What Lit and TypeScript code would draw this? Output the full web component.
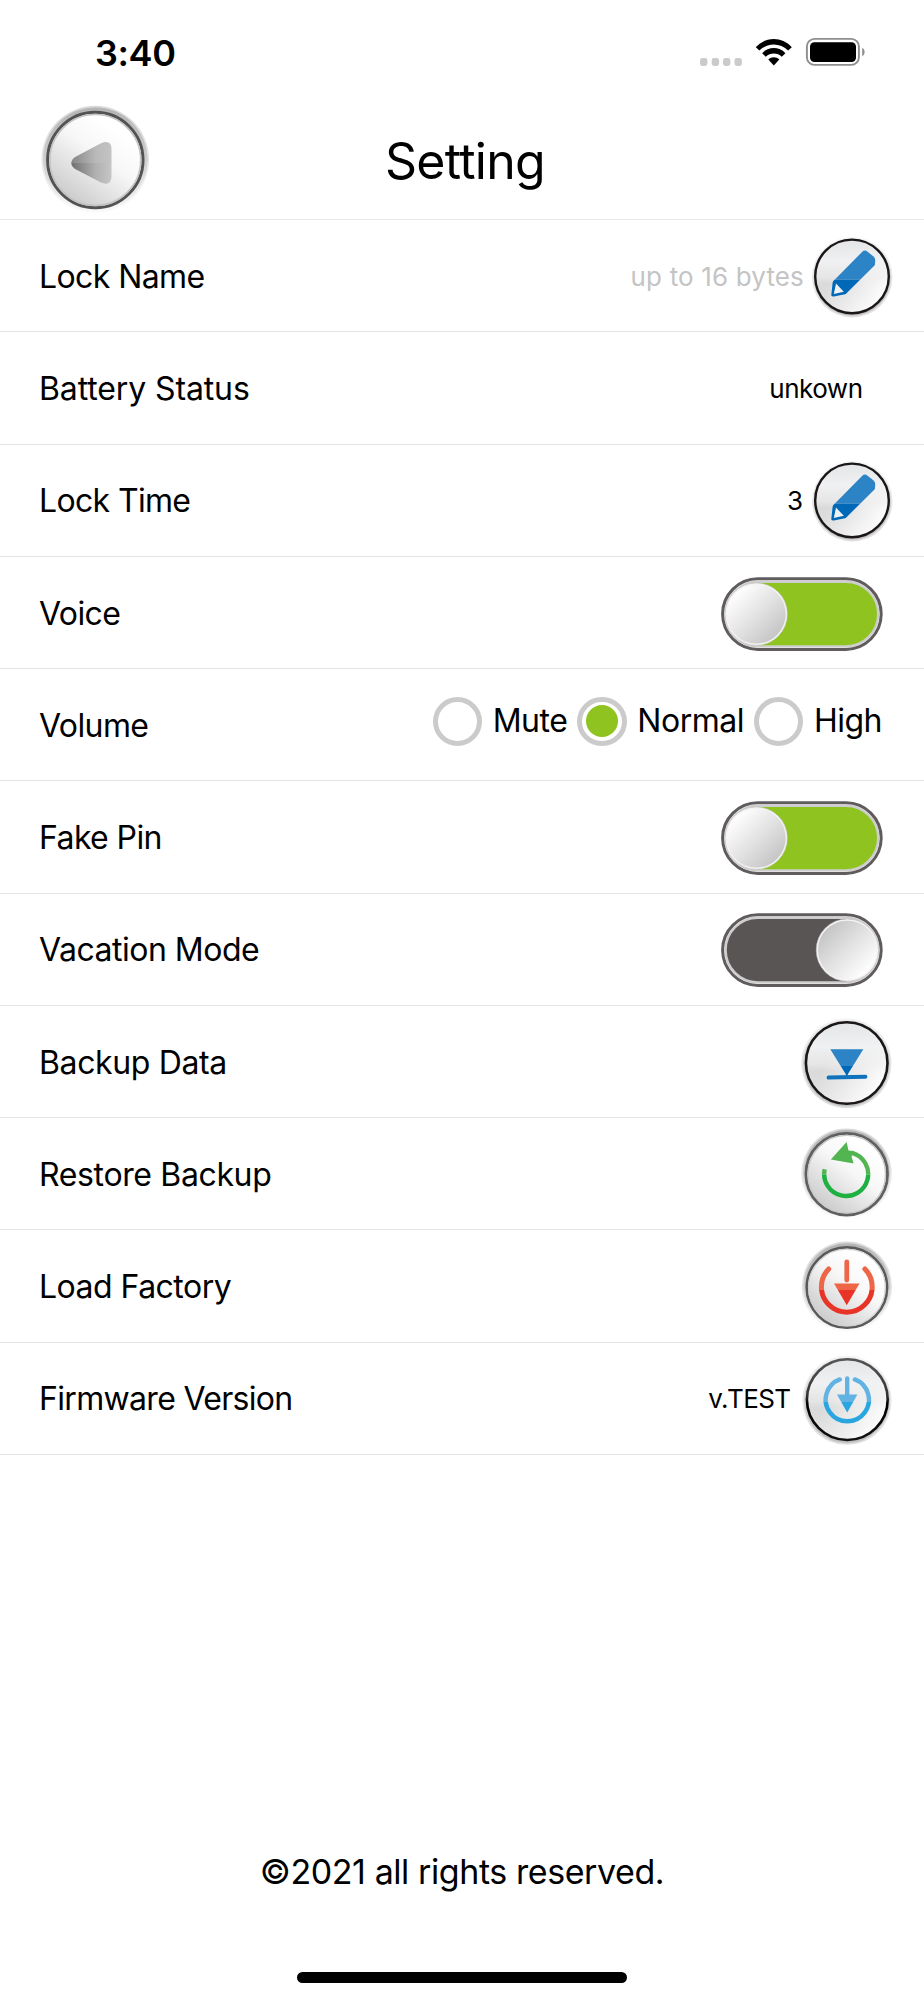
import { LitElement, html, css, svg, nothing } from "lit";
import { customElement, property, state } from "lit/decorators.js";
import { styleMap } from "lit/directives/style-map.js";

@customElement("status-bar")
class StatusBar extends LitElement {
  static styles = css`
    :host { display: flex; height: 104px; box-sizing: border-box; padding: 30px 59px 0 95px; justify-content: space-between; align-items: flex-start; }
    .time { font-size: 36px; font-weight: 600; line-height: 46px; letter-spacing: -0.4px; }
    .icons { display: block; width: 170px; height: 46px; }
  `;
  render() {
    return html`
      <span class="time">3:40</span>
      <svg class="icons" viewBox="695 30 170 46">
        <g fill="#cbcbcb">
          <rect x="700" y="58" width="7.4" height="8" rx="2.4" />
          <rect x="711.7" y="58" width="7.4" height="8" rx="2.4" />
          <rect x="723" y="58" width="7.4" height="8" rx="2.4" />
          <rect x="734.5" y="58" width="7.4" height="8" rx="2.4" />
        </g>
        <g>
          <path d="M755.8 47.2C765.5 36.4 782.1 36.4 791.8 47.2L788.2 50.6C780.4 42.4 767.2 42.4 759.4 50.6Z" />
          <path d="M762.2 53.2C768.6 46.4 779 46.4 785.4 53.2L781.8 56.7C777.4 52.3 770.2 52.3 765.8 56.7Z" />
          <path d="M768.3 59.6C771.4 56.4 776.2 56.4 779.3 59.6L773.8 65.4Z" />
        </g>
        <rect x="806.9" y="38.9" width="52" height="26" rx="7.6" fill="none" stroke="#8e8e8e" stroke-width="1.9" />
        <rect x="810" y="42.2" width="46" height="19.8" rx="4.4" />
        <path d="M862.2 48c3.2 1 3.2 7 0 8.2z" fill="#8e8e8e" />
      </svg>
    `;
  }
}

type Glyph = "back" | "edit" | "backup" | "restore" | "factory" | "firmware";

@customElement("round-button")
class RoundButton extends LitElement {
  @property() glyph: Glyph = "edit";

  static styles = css`
    :host { display: block; }
    svg { display: block; }
    .back { width: 112px; height: 112px; }
    .edit { width: 84px; height: 84px; }
    .backup, .restore, .factory, .firmware { width: 94px; height: 94px; }
  `;

  private defs(r: number, gray: boolean) {
    return svg`
      <defs>
        <linearGradient id="face" x1="0.75" y1="0.2" x2="0.2" y2="0.95">
          <stop offset="0" stop-color="#ffffff" />
          <stop offset="0.35" stop-color="#f8f7f8" />
          <stop offset="1" stop-color="#c9c8c9" />
        </linearGradient>
        <linearGradient id="plain" x1="0.15" y1="0.7" x2="0.8" y2="0.95">
          <stop offset="0" stop-color="#d3d3d3" />
          <stop offset="0.5" stop-color="#e6e6e6" />
          <stop offset="1" stop-color="#fcfcfc" />
        </linearGradient>
        <linearGradient id="gloss" x1="0" y1="0" x2="0" y2="1">
          <stop offset="0" stop-color="#e4e5e7" />
          <stop offset="0.3" stop-color="#f1f2f3" stop-opacity="0.95" />
          <stop offset="0.52" stop-color="#efefef" stop-opacity="0.65" />
          <stop offset="0.6" stop-color="#efefef" stop-opacity="0.25" />
          <stop offset="1" stop-color="#ffffff" stop-opacity="0.35" />
        </linearGradient>
        <linearGradient id="halo" x1="0" y1="0" x2="0" y2="1">
          <stop offset="0" stop-color=${gray ? "#b4b4b4" : "#ececec"} />
          <stop offset="0.5" stop-color="#cdcdce" />
          <stop offset="1" stop-color=${gray ? "#fbfafa" : "#c0bec1"} />
        </linearGradient>
        <linearGradient id="rim" x1="0" y1="0" x2="0" y2="1">
          <stop offset="0" stop-color="#555" />
          <stop offset="0.45" stop-color="#333" />
          <stop offset="0.55" stop-color="#000" />
          <stop offset="1" stop-color="#111" />
        </linearGradient>
        <linearGradient id="arrow" x1="0" y1="0" x2="1" y2="0">
          <stop offset="0" stop-color="#858585" />
          <stop offset="0.6" stop-color="#b9b9ba" />
          <stop offset="1" stop-color="#c4c4c4" />
        </linearGradient>
        <linearGradient id="arrowLow" x1="0" y1="0" x2="1" y2="0">
          <stop offset="0" stop-color="#6f6f6f" />
          <stop offset="0.6" stop-color="#b0b0b0" />
          <stop offset="1" stop-color="#c6c6c6" />
        </linearGradient>
        <clipPath id="upper"><rect x="0" y="0" width="120" height=${r} /></clipPath>
        <clipPath id="lower"><rect x="0" y=${r} width="120" height="120" /></clipPath>
      </defs>`;
  }

  private halo(cx: number, cy: number, r: number) {
    return svg`
      <circle cx=${cx} cy=${cy} r=${r} fill="url(#halo)" opacity="0.5" />
      <circle cx=${cx} cy=${cy} r=${r - 1.6} fill="url(#halo)" />`;
  }

  private back() {
    const tri = "M32.5 55.5Q30 59 32.5 62.5Q34 64.5 37 66L61 78.6Q71 82.5 71.5 72.5V44.5Q71 35.5 61 39.2L37 52Q34 53.2 32.5 55.5Z";
    return html`<svg class="back" viewBox="0 0 112 112">
      ${this.defs(59, true)}
      ${this.halo(55.3, 55.6, 53.8)}
      <circle cx="55.3" cy="56" r="47.7" fill="url(#face)" stroke="#535254" stroke-width="3" />
      <circle cx="55.3" cy="56" r="45.4" fill="none" stroke="#c2c2c3" stroke-width="1.5" />
      <path clip-path="url(#upper)" d=${tri} fill="url(#arrow)" />
      <path clip-path="url(#lower)" d=${tri} fill="url(#arrowLow)" />
    </svg>`;
  }

  private edit() {
    const body = "M23.8 45.6L52.3 16.7Q54.8 14.3 57.6 16.7L63.6 21.6Q65.6 23.4 65.2 26L65 29.2Q64.8 30.2 64 31L36.3 58.4Q35.8 59 35 59.2L23.8 61.4Q20.6 62 21.4 59L22.6 48Q22.8 46.6 23.8 45.6Z";
    return html`<svg class="edit" viewBox="0 0 84 84">
      ${this.defs(44.5, false)}
      ${this.halo(42.3, 42.2, 40.2)}
      <circle cx="42" cy="41.4" r="36.8" fill="url(#plain)" />
      <circle cx="42" cy="41.4" r="36.8" fill="url(#gloss)" stroke="#1b1718" stroke-width="2.4" />
      <path clip-path="url(#upper)" d=${body} fill="#2c83c5" />
      <path clip-path="url(#lower)" d=${body} fill="#0069b7" />
      <path d="M26 48.6L33.8 56.8L23.8 59Z" fill="#eef2f6" />
    </svg>`;
  }

  private backup() {
    const tri = "M30.3 33.2H63.3L47.8 58.2V60H45.8V58.2Z";
    return html`<svg class="backup" viewBox="0 0 94 94">
      ${this.defs(50, false)}
      ${this.halo(46.5, 47.2, 45)}
      <circle cx="46.7" cy="47" r="40.8" fill="url(#plain)" />
      <circle cx="46.7" cy="47" r="40.8" fill="url(#gloss)" stroke="#1b1718" stroke-width="2.6" />
      <path clip-path="url(#upper)" d=${tri} fill="#2c83c5" />
      <path clip-path="url(#lower)" d=${tri} fill="#0069b7" />
      <path d="M28.6 61.6L65.4 60.8" stroke="#0f72bd" stroke-width="4" stroke-linecap="round" />
    </svg>`;
  }

  private restore() {
    const mark = (c: string) => svg`
      <path d="M24.7 41.2A22 22 0 1 0 52 24.8" fill="none" stroke=${c} stroke-width="4.4" />
      <path d="M30.8 31.5L46.6 14L48.5 22.6L54 23L51.6 28.8L53.6 35.4Z" fill=${c} />`;
    return html`<svg class="restore" viewBox="0 0 94 94">
      ${this.defs(46.5, true)}
      ${this.halo(46.5, 45.6, 45.2)}
      <circle cx="46.7" cy="46.2" r="40.8" fill="url(#face)" stroke="#606061" stroke-width="2.8" />
      <circle cx="46.7" cy="46.2" r="38.8" fill="none" stroke="#c8c8c9" stroke-width="1.3" />
      <g clip-path="url(#upper)">${mark("#53b552")}</g>
      <g clip-path="url(#lower)">${mark("#1fb042")}</g>
    </svg>`;
  }

  private factory() {
    const mark = (c: string) => svg`
      <g fill="none" stroke=${c} stroke-width="5" stroke-linecap="round">
        <path d="M28.7 29A25.4 25.4 0 1 0 64.9 29" />
        <path d="M46.8 22V40" stroke-width="4.8" />
      </g>
      <path d="M34 43.5H59.5L46.8 65.2Z" fill=${c} />`;
    return html`<svg class="factory" viewBox="0 0 94 94">
      ${this.defs(50, true)}
      ${this.halo(46.9, 46.8, 45.2)}
      <circle cx="46.9" cy="47.6" r="40.2" fill="url(#face)" stroke="#59585a" stroke-width="2.6" />
      <circle cx="46.9" cy="47.6" r="38.4" fill="none" stroke="#d0d0d1" stroke-width="1.2" />
      <g clip-path="url(#upper)">${mark("#ee6547")}</g>
      <g clip-path="url(#lower)">${mark("#e73427")}</g>
    </svg>`;
  }

  private firmware() {
    const mark = (c: string) => svg`
      <g fill="none" stroke=${c} stroke-width="4.4" stroke-linecap="round">
        <path d="M39.8 27.4A21.6 21.6 0 1 0 54.8 27.4" />
        <path d="M47.2 26.5V44" />
      </g>
      <path d="M37 42.5H57.4L47.2 60.6Z" fill=${c} />`;
    return html`<svg class="firmware" viewBox="0 0 94 94">
      ${this.defs(50, false)}
      ${this.halo(47, 48.2, 44.6)}
      <circle cx="47.3" cy="47.6" r="40.4" fill="url(#plain)" />
      <circle cx="47.3" cy="47.6" r="40.4" fill="url(#gloss)" stroke="url(#rim)" stroke-width="2.6" />
      <g clip-path="url(#upper)">${mark("#62b3e3")}</g>
      <g clip-path="url(#lower)">${mark("#29a6e0")}</g>
    </svg>`;
  }

  render() {
    return this[this.glyph]();
  }
}

@customElement("slide-switch")
class SlideSwitch extends LitElement {
  @property({ type: Boolean }) on = false;

  static styles = css`
    :host { display: block; }
    .switch { display: block; width: 162px; height: 74px; }
  `;

  render() {
    const cx = this.on ? 35.2 : 126.4;
    return html`<svg class="switch" viewBox="0 0 162 74">
      <defs>
        <linearGradient id="knob" x1=${this.on ? 0.15 : 0.85} y1=${this.on ? 0.15 : 0.85} x2=${this.on ? 0.85 : 0.15} y2=${this.on ? 0.85 : 0.15}>
          <stop offset="0" stop-color="#fff" />
          <stop offset="0.5" stop-color="#e4e3e4" />
          <stop offset="1" stop-color="#c6c5c6" />
        </linearGradient>
      </defs>
      <rect x="1.6" y="1.8" width="158.6" height="70.6" rx="35.3" fill="#f0eff0" stroke="#605c5e" stroke-width="3" />
      <rect x="4.6" y="4.8" width="152.6" height="64.6" rx="32.3" fill=${this.on ? "#8fc31f" : "#595554"} stroke="#cfcece" stroke-width="2.4" />
      <circle cx=${cx} cy="37.1" r="30.3" fill="url(#knob)" stroke="#f4f3f4" stroke-width="1.8" />
      <circle cx=${cx} cy="37.1" r="31.2" fill="none" stroke="#bcbbbb" stroke-width="0.5" />
    </svg>`;
  }
}

@customElement("volume-options")
class VolumeOptions extends LitElement {
  @property() value = "Normal";

  static styles = css`
    :host { display: flex; gap: 10px; padding: 0 42px 9px 0; }
    .option { display: flex; align-items: center; gap: 10.5px; font-size: 32px; letter-spacing: -0.5px; line-height: 50px; }
    .ring { display: grid; place-items: center; box-sizing: border-box; width: 49.5px; height: 49.5px; border: 5px solid #cbcbcb; border-radius: 50%; }
    .dot { width: 32px; height: 32px; border-radius: 50%; background: #8fc31f; }
  `;

  render() {
    return ["Mute", "Normal", "High"].map(
      (o) => html`<label class="option" @click=${() => (this.value = o)}>
        <span class="ring">${o === this.value ? html`<span class="dot"></span>` : nothing}</span>${o}
      </label>`
    );
  }
}

@customElement("setting-row")
class SettingRow extends LitElement {
  @property() label = "";
  @property({ type: Number }) tracking = 0;

  static styles = css`
    :host { display: flex; align-items: center; justify-content: space-between; box-sizing: border-box; height: 112.25px; padding: 2.6px 0 0 39px; border-bottom: 1.5px solid #e4e4e4; }
    .label { font-size: 32px; line-height: 40px; }
    .control { display: flex; align-items: center; }
  `;

  render() {
    return html`<span class="label" style=${styleMap({ letterSpacing: `${this.tracking}px` })}>${this.label}</span><span class="control"><slot></slot></span>`;
  }
}

@customElement("app-root")
class AppRoot extends LitElement {
  @state() private version = "v.TEST";

  static styles = css`
    :host { display: flex; flex-direction: column; height: 2000px; box-sizing: border-box; background: #fff; color: #000; font-family: Inter, "Liberation Sans", sans-serif; overflow: hidden; }
    .header { display: grid; grid-template-columns: 112px 1fr 112px; align-items: center; box-sizing: border-box; height: 116px; padding: 0 36px 0 40px; border-bottom: 1px solid #e8e8e8; }
    .backButton { margin-bottom: 3px; }
    .title { margin: 0; font-size: 50px; font-weight: 400; line-height: 60px; letter-spacing: -0.7px; text-align: center; padding: 0 0 1px 2px; }
    .value { font-size: 26px; line-height: 32px; }
    .hint { color: #c4c4c4; margin-right: 6px; letter-spacing: 0.15px; }
    .status { margin-right: 61.5px; letter-spacing: -0.5px; }
    .count { margin-right: 7px; }
    .version { margin-right: 9.5px; letter-spacing: -0.6px; }
    .narrow, .wide { margin-right: 30px; }
    .toggle { margin-right: 41px; }
    .footer { display: flex; flex-direction: column; align-items: center; margin-top: auto; height: 153px; }
    .copyright { margin: 0; font-size: 34px; line-height: 50px; letter-spacing: -0.42px; }
    .home { width: 330px; height: 11px; margin-top: 75px; border-radius: 6px; background: #000; }
  `;

  render() {
    return html`
      <status-bar></status-bar>
      <header class="header">
        <round-button class="backButton" glyph="back"></round-button>
        <h1 class="title">Setting</h1>
      </header>
      <main>
        <setting-row label="Lock Name" tracking="-0.6"><span class="value hint">up to 16 bytes</span><round-button class="narrow" glyph="edit"></round-button></setting-row>
        <setting-row label="Battery Status" tracking="-0.12"><span class="value status">unkown</span></setting-row>
        <setting-row label="Lock Time" tracking="-0.65"><span class="value count">3</span><round-button class="narrow" glyph="edit"></round-button></setting-row>
        <setting-row label="Voice" tracking="-0.6"><slide-switch class="toggle" on></slide-switch></setting-row>
        <setting-row label="Volume" tracking="-0.6"><volume-options></volume-options></setting-row>
        <setting-row label="Fake Pin" tracking="-0.6"><slide-switch class="toggle" on></slide-switch></setting-row>
        <setting-row label="Vacation Mode" tracking="-0.5"><slide-switch class="toggle"></slide-switch></setting-row>
        <setting-row label="Backup Data" tracking="-0.36"><round-button class="wide" glyph="backup"></round-button></setting-row>
        <setting-row label="Restore Backup" tracking="-0.36"><round-button class="wide" glyph="restore"></round-button></setting-row>
        <setting-row label="Load Factory" tracking="-0.52"><round-button class="wide" glyph="factory"></round-button></setting-row>
        <setting-row label="Firmware Version" tracking="-0.68"><span class="value version">${this.version}</span><round-button class="wide" glyph="firmware"></round-button></setting-row>
      </main>
      <footer class="footer">
        <p class="copyright">©2021 all rights reserved.</p>
        <div class="home"></div>
      </footer>
    `;
  }
}
